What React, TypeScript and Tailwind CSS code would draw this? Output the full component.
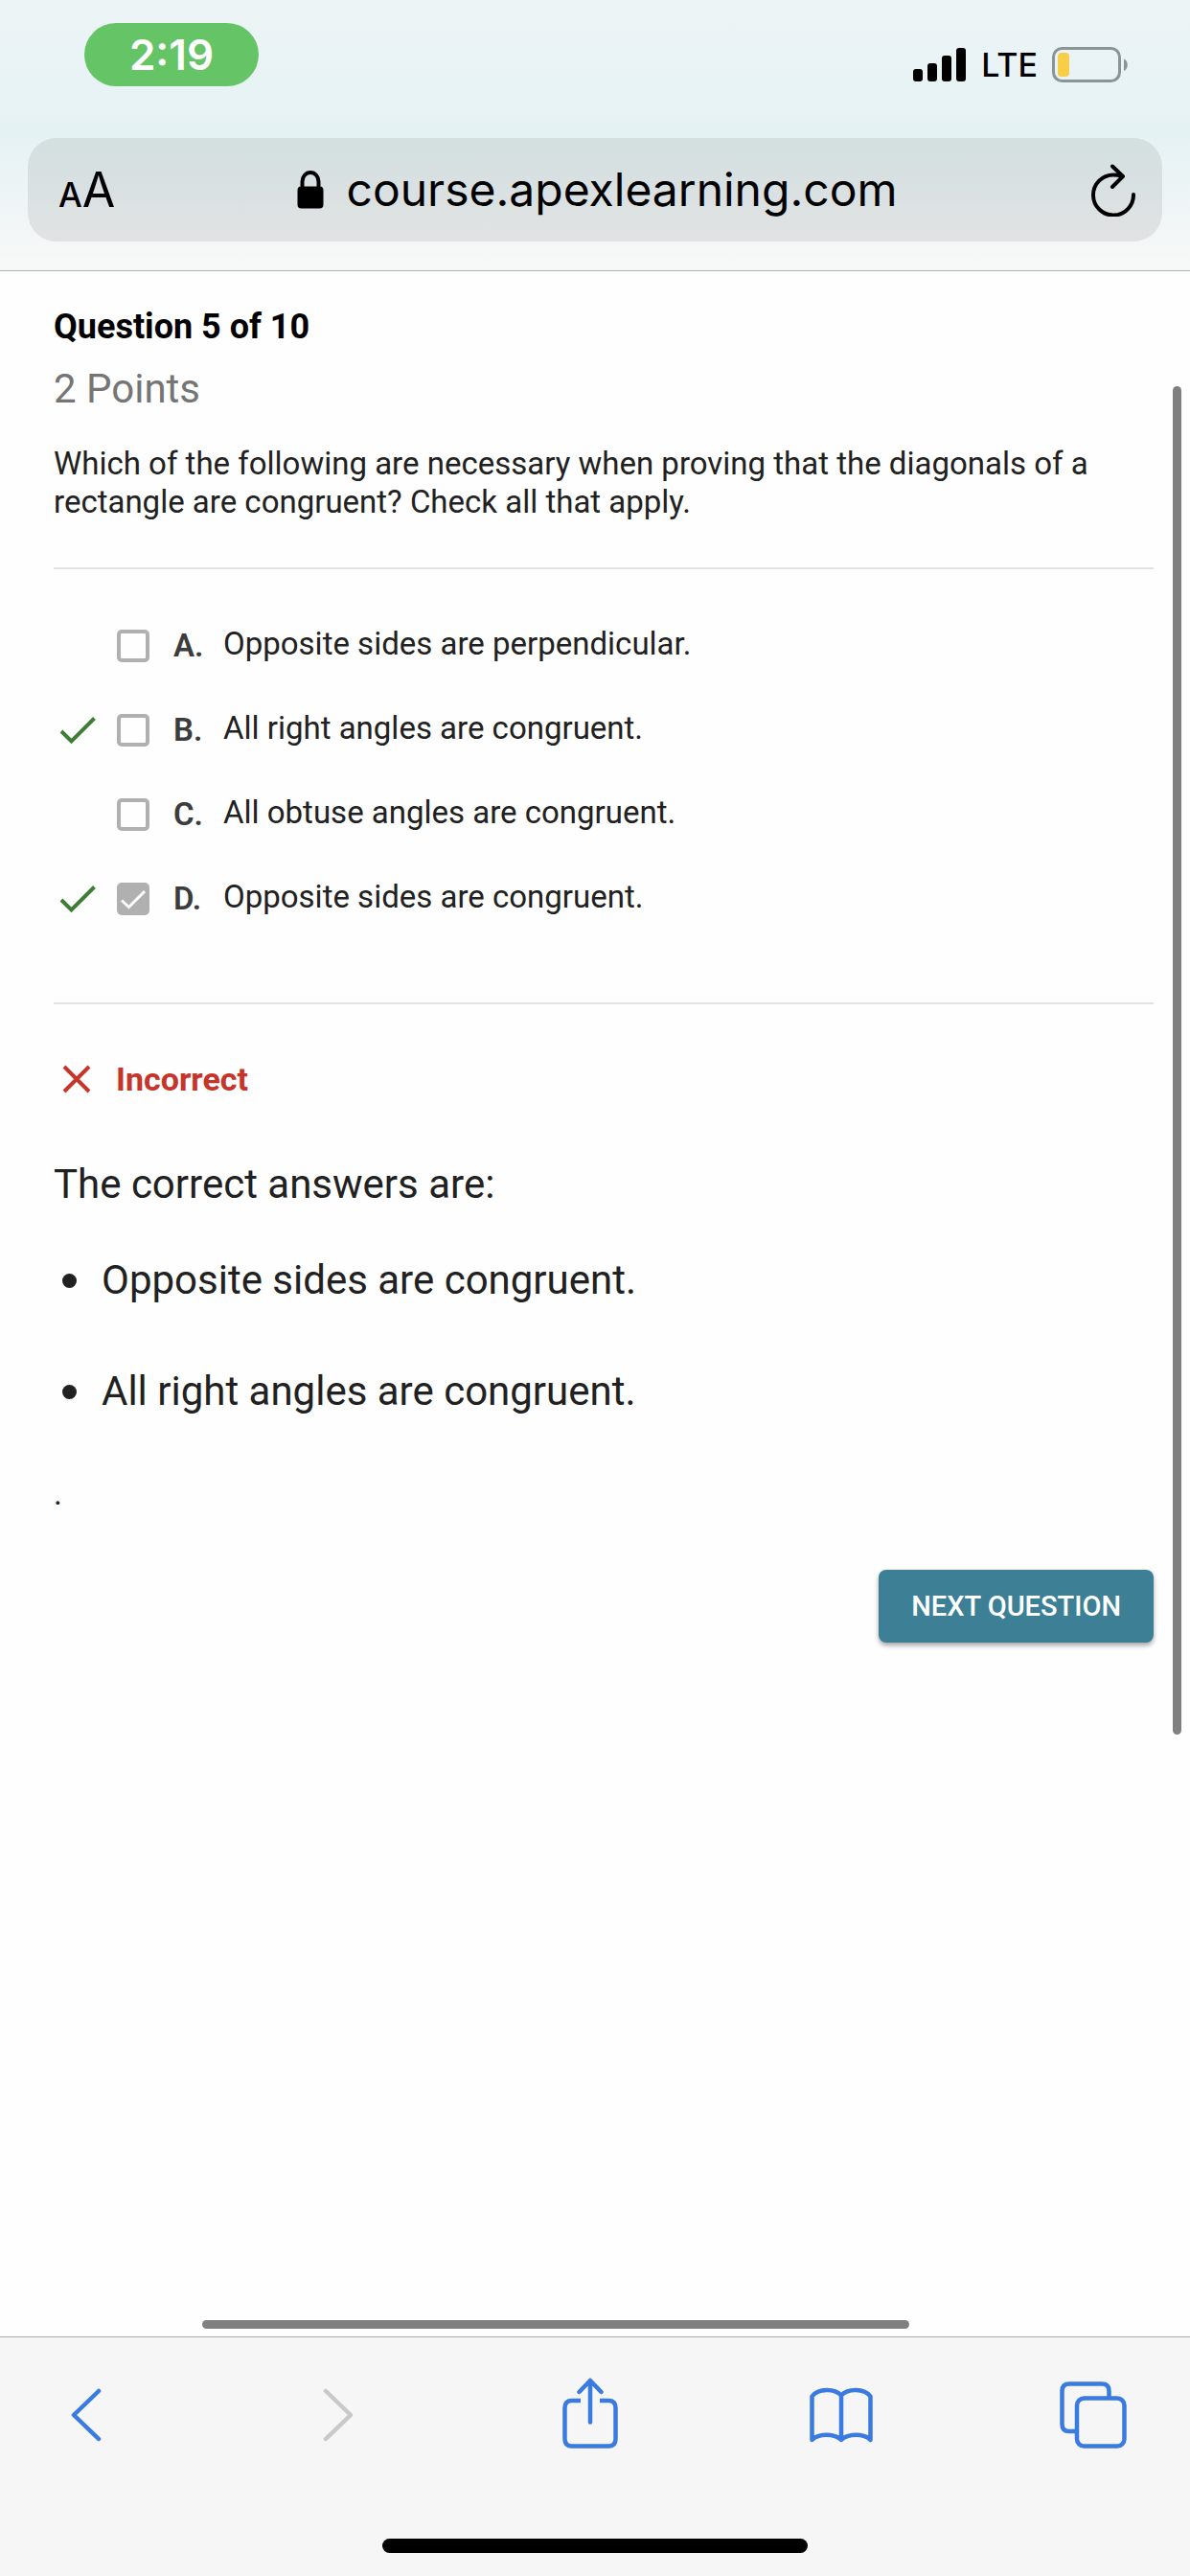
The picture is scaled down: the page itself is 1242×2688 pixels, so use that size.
import React from 'react';

type Option = { letter: string; text: string; correct: boolean; checked: boolean };

const options: Option[] = [
  { letter: 'A', text: 'Opposite sides are perpendicular.', correct: false, checked: false },
  { letter: 'B', text: 'All right angles are congruent.', correct: true, checked: false },
  { letter: 'C', text: 'All obtuse angles are congruent.', correct: false, checked: false },
  { letter: 'D', text: 'Opposite sides are congruent.', correct: true, checked: true },
];

const answers = ['Opposite sides are congruent.', 'All right angles are congruent.'];

function StatusBar() {
  return (
    <div className="flex h-[90px] items-start justify-between pl-[88px] pr-[64px] pt-6">
      <div className="flex h-[66px] w-[182px] items-center justify-center rounded-full bg-[#65c466] text-[44px] font-semibold leading-none text-white">
        2:19
      </div>
      <div className="flex items-center gap-[15px] pt-6">
        <svg width="56" height="36" viewBox="0 0 56 36" aria-label="Signal strength" role="img">
          <rect x="0" y="22" width="10" height="13" rx="3" />
          <rect x="15" y="16" width="10" height="19" rx="3" />
          <rect x="30" y="8" width="10" height="27" rx="3" />
          <rect x="45" y="0" width="10" height="35" rx="3" />
        </svg>
        <span className="text-[34px] font-medium leading-[40px]">LTE</span>
        <svg width="80" height="38" viewBox="0 0 80 38" aria-label="Battery low" role="img">
          <rect x="1.5" y="1.5" width="69" height="34" rx="9" fill="none" stroke="#8a9496" strokeWidth="3" />
          <rect x="6" y="6" width="12" height="25" rx="4" fill="#f7ce46" />
          <path d="M75 12.500c5 2 5 10.500 0 12.500z" fill="#8a9496" />
        </svg>
      </div>
    </div>
  );
}

function AddressBar() {
  return (
    <div className="mx-[29px] mt-[54px] flex h-[108px] items-center justify-between rounded-[30px] bg-black/8 pl-8 pr-7">
      <button type="button" aria-label="Page settings" className="flex w-[46px] items-baseline leading-none">
        <span className="text-[35px] font-medium">A</span>
        <span className="text-[50px]">A</span>
      </button>
      <button type="button" className="flex items-center gap-6 text-[48px] leading-[60px]">
        <svg width="28" height="40" viewBox="0 0 28 40" aria-hidden="true">
          <rect x="0.500" y="16.500" width="27" height="23" rx="4" />
          <path d="M5.500 18V11.500a8.500 9.500 0 0 1 17 0V18" fill="none" stroke="black" strokeWidth="4" />
        </svg>
        course.apexlearning.com
      </button>
      <button type="button" aria-label="Reload" className="flex w-[46px] justify-end">
        <svg width="46" height="55" viewBox="0 0 46 55" fill="none" stroke="black" strokeWidth="4" strokeLinecap="round" strokeLinejoin="round" aria-hidden="true">
          <path d="M44 32A21 21 0 1 1 23 11.500Q28 11.500 31 12.500" />
          <path d="M22 2.500L33 13L22 24" />
        </svg>
      </button>
    </div>
  );
}

function OptionRow({ option }: { option: Option }) {
  const id = `option-${option.letter}`;
  return (
    <li className="flex h-[88px] items-center">
      <div className="flex w-[66px] pl-[6px]">
        {option.correct && (
          <svg width="38" height="30" viewBox="0 0 38 30" fill="none" stroke="#3f7d36" strokeWidth="4" role="img" aria-label="Correct answer">
            <path d="M2 16L12.500 26.500L36.500 2.500" />
          </svg>
        )}
      </div>
      <span className="relative flex">
        <input
          id={id}
          type="checkbox"
          defaultChecked={option.checked}
          className="peer h-[34px] w-[34px] appearance-none rounded-[5px] border-4 border-[#b0b0b0] checked:bg-[#b0b0b0]"
        />
        <svg className="pointer-events-none absolute inset-0 hidden peer-checked:block" width="34" height="34" viewBox="0 0 34 34" fill="none" stroke="white" strokeWidth="3" aria-hidden="true">
          <path d="M5 18.500L12.500 25.500L29 9" />
        </svg>
      </span>
      <label htmlFor={id} className="flex items-center pl-[25px] leading-10">
        <span className="w-[52px] text-[33px] font-semibold text-[#3c3c3c]">{option.letter}.</span>
        <span className="pb-1 text-[33px]">{option.text}</span>
      </label>
    </li>
  );
}

function Question() {
  return (
    <main className="relative flex-1 bg-[#fefefe] px-14 pt-9 font-[Roboto,sans-serif] text-[#212121]">
      <div className="-mr-[18px]">
        <h1 className="text-[36px] font-bold leading-[44px] text-black">Question 5 of 10</h1>
        <p className="pt-[17px] text-[42px] leading-[52px] text-[#757575]">2 Points</p>
        <p className="pt-8 text-[33px] leading-10">
          Which of the following are necessary when proving that the diagonals of a rectangle are congruent? Check all that apply.
        </p>
        <hr className="mt-12 border-t-2 border-[#e2e2e2]" />
        <ul className="pb-16 pt-9">
          {options.map((option) => (
            <OptionRow key={option.letter} option={option} />
          ))}
        </ul>
        <hr className="border-t-2 border-[#e2e2e2]" />
        <div className="flex items-center pt-14 text-[#c5352b]">
          <svg className="ml-[9px]" width="30" height="30" viewBox="0 0 30 30" fill="none" stroke="#c5352b" strokeWidth="4" aria-hidden="true">
            <path d="M2 2L28 28M28 2L2 28" />
          </svg>
          <strong className="pl-[26px] text-[34px] font-bold leading-[44px]">Incorrect</strong>
        </div>
        <p className="pt-[62px] text-[42px] leading-[52px]">The correct answers are:</p>
        <ul className="pt-12">
          {answers.map((answer) => (
            <li key={answer} className="mb-16 flex items-center text-[42px] leading-[52px]">
              <span className="ml-[9px] mr-[26px] h-[15px] w-[15px] rounded-full bg-[#212121]" />
              {answer}
            </li>
          ))}
        </ul>
        <p className="-mt-1 text-[34px] leading-[40px]">.</p>
        <div className="flex justify-end pt-[60px]">
          <button type="button" className="h-[76px] rounded-lg bg-[#3d8095] px-[34px] text-[29px] font-medium leading-none text-white shadow-[0_3px_5px_rgba(0,0,0,0.35)]">
            NEXT QUESTION
          </button>
        </div>
      </div>
      <div className="absolute right-[9px] top-[120px] h-[1407px] w-[9px] rounded-full bg-[#808080]" />
      <div className="absolute bottom-2 left-[17%] right-[293px] h-[9px] rounded-full bg-[#808080]" />
    </main>
  );
}

const toolButton = 'flex h-[80px] w-[108px] items-center justify-center';

function Toolbar() {
  const stroke = {
    fill: 'none',
    stroke: '#3a7be2',
    strokeWidth: 4.5,
    strokeLinecap: 'round' as const,
    strokeLinejoin: 'round' as const,
    'aria-hidden': true,
  };
  return (
    <footer className="border-t border-[#a9acab] bg-[#f6f6f6] pb-6">
      <nav className="flex items-center justify-between pb-[89px] pl-9 pr-[47px] pt-[41px]">
        <button type="button" aria-label="Back" className={toolButton}>
          <svg width="32" height="56" viewBox="0 0 32 56" {...stroke}>
            <path d="M29 3L3 28L29 53" />
          </svg>
        </button>
        <button type="button" aria-label="Forward" className={toolButton}>
          <svg width="32" height="56" viewBox="0 0 32 56" {...stroke} stroke="#c9c9c9">
            <path d="M3 3L29 28L3 53" />
          </svg>
        </button>
        <button type="button" aria-label="Share" className={toolButton}>
          <svg className="-mt-1" width="58" height="74" viewBox="0 0 58 74" {...stroke}>
            <path d="M19 24H10Q2.500 24 2.500 31.500V64Q2.500 71.500 10 71.500H48Q55.500 71.500 55.500 64V31.500Q55.500 24 48 24H39" strokeLinecap="butt" />
            <path d="M29 46.500V3M17.500 15L29 3L40.500 15" />
          </svg>
        </button>
        <button type="button" aria-label="Bookmarks" className={toolButton}>
          <svg width="66" height="58" viewBox="0 0 66 58" {...stroke}>
            <path d="M33 8.500C26 1 9 1 2.500 9.500V55C9 48 26 48 33 55C40 48 57 48 63.500 55V9.500C57 1 40 1 33 8.500V55" />
          </svg>
        </button>
        <button type="button" aria-label="Tabs" className={toolButton}>
          <svg width="70" height="70" viewBox="0 0 70 70" {...stroke}>
            <path d="M16 52H10Q2.500 52 2.500 44.500V10Q2.500 2.500 10 2.500H44Q51.500 2.500 51.500 10V17" strokeLinecap="butt" />
            <rect x="18" y="17.500" width="49.500" height="50" rx="7.500" />
          </svg>
        </button>
      </nav>
      <div className="mx-auto h-[15px] w-[444px] rounded-full bg-black" />
    </footer>
  );
}

export default function App() {
  return (
    <div className="flex min-h-screen flex-col bg-white font-[Inter,sans-serif] text-black">
      <header className="border-b border-[#a9b0b0] bg-linear-to-b from-[#edf4f6] via-[#e5f2f4] to-[#f8f8f8] pb-[30px]">
        <StatusBar />
        <AddressBar />
      </header>
      <Question />
      <Toolbar />
    </div>
  );
}
